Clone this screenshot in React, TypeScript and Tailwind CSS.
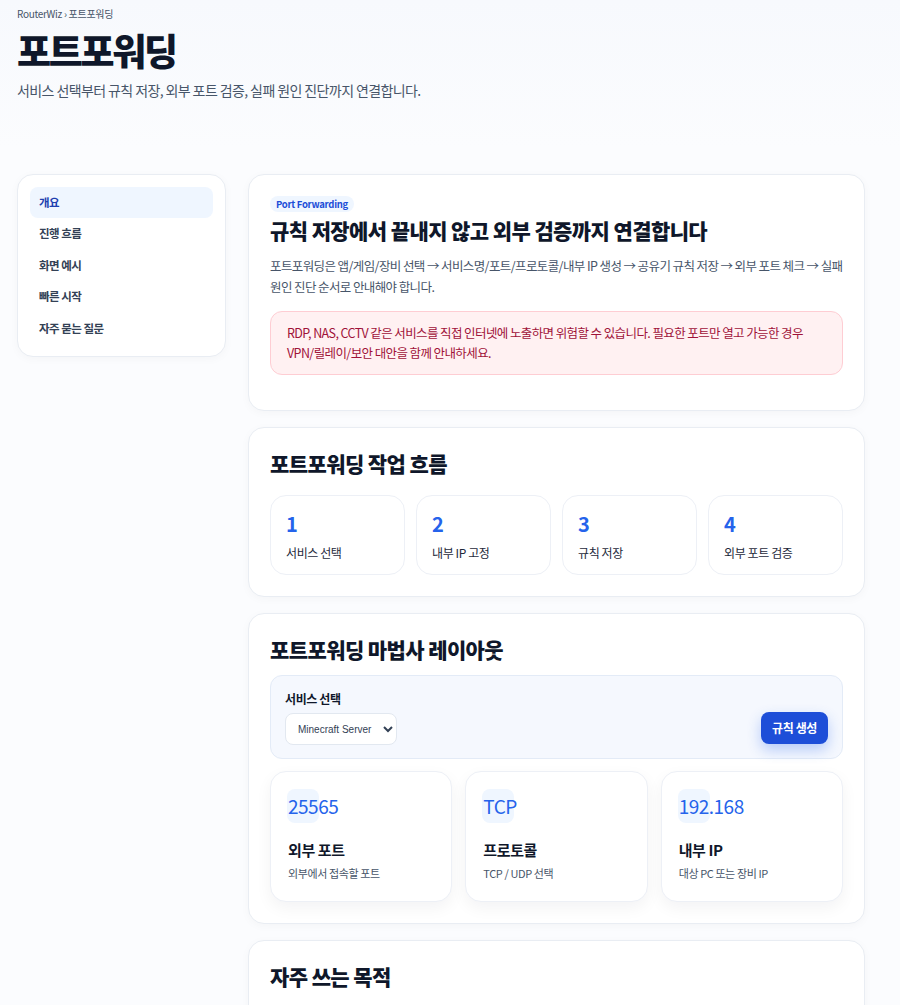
import React from 'react';

const font = { fontFamily: '"Noto Sans CJK KR", "Noto Sans", sans-serif' };

const navItems = ['개요', '진행 흐름', '화면 예시', '빠른 시작', '자주 묻는 질문'];
const steps = ['서비스 선택', '내부 IP 고정', '규칙 저장', '외부 포트 검증'];
const results = [
  { value: '25565', title: '외부 포트', desc: '외부에서 접속할 포트' },
  { value: 'TCP', title: '프로토콜', desc: 'TCP / UDP 선택' },
  { value: '192.168', title: '내부 IP', desc: '대상 PC 또는 장비 IP' },
];

function Card({ children }: { children: React.ReactNode }) {
  return (
    <section className="rounded-2xl border border-[#e9edf3] bg-white px-[21px] pt-[21px] pb-[21px] shadow-[0_2px_10px_rgba(15,23,42,0.03)]">
      {children}
    </section>
  );
}

export default function App() {
  return (
    <div className="min-h-screen bg-[#fbfcfe] text-[#0f172a]" style={font}>
      <header className="bg-gradient-to-b from-[#f7f9fd] to-[#fbfcfe] px-[17px] pt-[6px] pb-[46px]">
        <div className="text-[10px] tracking-[-0.3px] text-[#475569]">RouterWiz › 포트포워딩</div>
        <h1 className="mt-[7px] text-[37px] font-black leading-[44px] tracking-[-2.3px] text-[#0f172a]">포트포워딩</h1>
        <p className="mt-[8px] text-[14px] tracking-[-0.6px] text-[#475569]">서비스 선택부터 규칙 저장, 외부 포트 검증, 실패 원인 진단까지 연결합니다.</p>
      </header>

      <div className="flex items-start gap-[22px] pl-[17px] pr-[35px] pt-[27px]">
        <aside className="w-[209px] shrink-0 rounded-2xl border border-[#e9edf3] bg-white p-[12px] shadow-[0_2px_10px_rgba(15,23,42,0.03)]">
          <nav className="flex flex-col">
            {navItems.map((item, i) => (
              <a
                key={item}
                className={
                  i === 0
                    ? 'rounded-lg bg-[#eff6ff] px-[9px] py-[7px] text-[11.5px] font-bold leading-[17px] tracking-[-0.5px] text-[#1e40af]'
                    : 'rounded-lg px-[9px] py-[7px] text-[11.5px] font-semibold leading-[17.5px] tracking-[-0.5px] text-[#334155]'
                }
              >
                {item}
              </a>
            ))}
          </nav>
        </aside>

        <main className="flex min-w-0 flex-1 flex-col gap-[16px]">
          <Card>
            <div className="w-fit rounded-full bg-[#eff6ff] px-[6px] py-[2px] text-[9.5px] font-bold leading-[12px] tracking-[-0.3px] text-[#1d4ed8]">Port Forwarding</div>
            <h2 className="mt-[4px] text-[21px] font-extrabold leading-[28px] tracking-[-0.6px] text-[#0f172a]">규칙 저장에서 끝내지 않고 외부 검증까지 연결합니다</h2>
            <p className="mt-[11px] text-[12.5px] leading-[21px] tracking-[-0.6px] text-[#475569]">
              포트포워딩은 앱/게임/장비 선택 → 서비스명/포트/프로토콜/내부 IP 생성 → 공유기 규칙 저장 → 외부 포트 체크 → 실패 원인 진단 순서로 안내해야 합니다.
            </p>
            <div className="mt-[14px] mb-[14px] rounded-xl border border-[#fecdd3] bg-[#fff1f2] px-[16px] py-[11px] text-[12.5px] leading-[20px] tracking-[-0.6px] text-[#9f1239]">
              RDP, NAS, CCTV 같은 서비스를 직접 인터넷에 노출하면 위험할 수 있습니다. 필요한 포트만 열고 가능한 경우 VPN/릴레이/보안 대안을 함께 안내하세요.
            </div>
          </Card>

          <Card>
            <h2 className="text-[21px] font-extrabold leading-[28px] tracking-[-0.6px] text-[#0f172a]">포트포워딩 작업 흐름</h2>
            <div className="mt-[18px] grid grid-cols-4 gap-[11px]">
              {steps.map((s, i) => (
                <div key={s} className="h-[80px] rounded-2xl border border-[#edf0f6] bg-white px-[15px] pt-[14px]">
                  <div className="text-[20px] font-bold leading-[28px] text-[#2563eb]">{i + 1}</div>
                  <div className="mt-[6px] text-[12px] leading-[18px] tracking-[-0.4px] text-[#1e293b]">{s}</div>
                </div>
              ))}
            </div>
          </Card>

          <Card>
            <h2 className="text-[21px] font-extrabold leading-[28px] tracking-[-0.6px] text-[#0f172a]">포트포워딩 마법사 레이아웃</h2>
            <div className="mt-[12px] flex items-end justify-between rounded-xl border border-[#e3ebf7] bg-[#f5f8fe] px-[14px] pt-[14px] pb-[13px]">
              <div>
                <div className="text-[12px] font-bold leading-[17px] tracking-[-0.4px] text-[#0f172a]">서비스 선택</div>
                <select className="mt-[6px] h-[32px] rounded-lg border border-[#e2e8f0] bg-white px-[8px] font-['Liberation_Sans',sans-serif] text-[10px] text-[#334155]" defaultValue="Minecraft Server">
                  <option>Minecraft Server</option>
                </select>
              </div>
              <button className="mb-[1px] h-[32px] rounded-lg bg-[#1d4ed8] px-[11px] text-[12px] font-bold tracking-[-0.4px] text-white shadow-[0_6px_14px_rgba(37,99,235,0.3)]">규칙 생성</button>
            </div>
            <div className="mt-[12px] grid grid-cols-3 gap-[13px]">
              {results.map((r) => (
                <div key={r.title} className="h-[131px] rounded-2xl border border-[#edf0f6] bg-white px-[17px] pt-[17px] shadow-[0_6px_16px_rgba(15,23,42,0.05)]">
                  <div className="relative h-[34px]">
                    <div className="absolute left-[-1px] top-0 h-[34px] w-[32px] rounded-lg bg-[#eff6ff]" />
                    <div className="relative text-[19px] leading-[34px] tracking-[-0.5px] text-[#2563eb]">{r.value}</div>
                  </div>
                  <div className="mt-[16px] text-[15px] font-bold leading-[22px] tracking-[-0.4px] text-[#0f172a]">{r.title}</div>
                  <div className="mt-[4px] text-[11px] leading-[16px] tracking-[-0.4px] text-[#475569]">{r.desc}</div>
                </div>
              ))}
            </div>
          </Card>

          <Card>
            <h2 className="text-[21px] font-extrabold leading-[28px] tracking-[-0.6px] text-[#0f172a]">자주 쓰는 목적</h2>
            <div className="mt-[19px] grid grid-cols-4 gap-[11px]">
              {['게임 서버', 'NAS 원격 접속', 'CCTV 보기', '원격 데스크톱'].map((s) => (
                <div key={s} className="h-[80px] rounded-2xl border border-[#edf0f6] bg-white px-[15px] pt-[14px]">
                  <div className="text-[13px] font-bold text-[#0f172a]">{s}</div>
                </div>
              ))}
            </div>
          </Card>
        </main>
      </div>
    </div>
  );
}
